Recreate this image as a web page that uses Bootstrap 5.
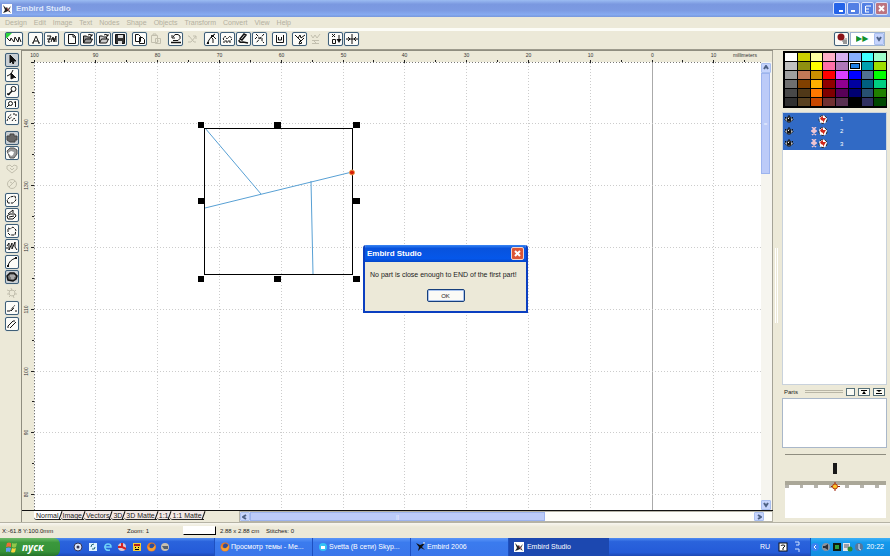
<!DOCTYPE html>
<html lang="en">
<head>
<meta charset="utf-8">
<meta name="viewport" content="width=device-width, initial-scale=1">
<title>Embird Studio</title>
<link href="https://cdn.jsdelivr.net/npm/bootstrap@5.3.0/dist/css/bootstrap.min.css" rel="stylesheet">
<style>
:root { --face:#ece9d8; --blue:#316ac5; }
body { font:6px/8px "Liberation Sans", Arial, sans-serif; color:#222; background:var(--face); white-space:nowrap; }
button, select, input { font:inherit; color:inherit; padding:0; border-radius:0; }
svg { display:block; flex:none; }
.ico { fill:none; stroke:#111; stroke-width:1; }
.titlebar { height:17px; padding:0 2px; background:linear-gradient(#9bbcf2,#7a98e0 25%,#7c9ae2 60%,#86aaf0 85%,#7898dc); color:#dfe8fb; font:bold 8px/16px "Liberation Sans", Arial, sans-serif; }
.winbtn { width:13px; height:13px; border:1px solid #d4e0fb; border-radius:2px; background:#5380e4; }
.winbtn.is-lit { background:#2463e8; }
.winbtn.is-close { background:#bc7480; }
.winbtn svg, .dlg-close svg { stroke:#fff; fill:none; stroke-width:2; margin:auto; }
.menubar { height:11px; padding:2px 5px 0; gap:7px; font-size:7px; }
.menubar a { color:#b3b0a0; text-decoration:none; }
.toolbar { height:22px; border-top:3px solid #fcfcf6; border-bottom:1px solid #9d9b8d; padding:1px 5px; gap:5px; }
.tool { width:15px; height:14px; border:1px solid #3f5f78; border-radius:2px; background:#fbfbf8; box-shadow:0 0 1px #8db0d0; display:flex; align-items:center; justify-content:center; }
.tool.is-wide { width:18px; }
.tool.is-short { height:10px; }
.tool.is-down { background:#c9cfd4; }
.tool:disabled { background:none; border-color:transparent; box-shadow:none; }
.tool:disabled svg { stroke:#c2bfae; }
.hair { gap:1px; }
.toolbox { width:21px; padding:3px 0 0 5px; gap:2px; }
.toolbox .tool { width:14px; }
.combo { width:35px; height:14px; border:1px solid #9fb4d0; background:#fff; }
.combo select { appearance:none; border:0; background:#fff; color:#12922a; font:8px/12px "DejaVu Sans", sans-serif; padding-left:5px; min-width:0; }
.scrollbtn { width:10px; height:10px; border:1px solid #a9bff0; border-radius:1px; background:#c6d4fc; display:flex; align-items:center; justify-content:center; }
.scrollbtn svg { stroke:#4d6185; fill:none; stroke-width:2; }
.workspace { border-left:1px solid #8f8d80; border-top:1px solid #8f8d80; }
.vbar { width:12px; padding-top:12px; border-right:1px solid #a5a397; background:linear-gradient(var(--face) 11px,#f6f5ef 11px); }
.thumb { background:#bccbf8; border:1px solid #9db4ee; display:flex; align-items:center; justify-content:center; color:#eef3ff; }
.vbar .thumb { height:101px; width:9px; }
.sheet-row { height:12px; border-top:1px solid #111; background:var(--face); }
.sheets { width:217px; padding-left:12px; }
.sheets button { display:flex; background:#fff; border:0; border-bottom:1px solid #222; height:9px; padding:0 0 0 2px; gap:1px; border-bottom-left-radius:3px; font-size:7px; line-height:9px; }
.sheets button::after { content:""; width:1px; height:9px; background:#111; transform:rotate(20deg); }
.sheets button + button { background:#f3e9e6; }
.hbar { border:1px solid #b5b3a6; background:#fdfdfa; }
.hbar .thumb { width:295px; }
.ruler-text { font:5px "Liberation Sans", sans-serif; fill:#333; }
.dialog-win { position:absolute; left:341px; top:194px; width:165px; border:2px solid #0b3fc0; border-top:0; border-radius:3px 3px 0 0; background:var(--face); overflow:hidden; }
.dialog-title { height:17px; padding:0 2px; background:linear-gradient(#3a86f4,#0853dd 20%,#0557ea 80%,#0446c8); color:#fff; font:bold 8px/16px "Liberation Sans", Arial, sans-serif; }
.dlg-close { width:13px; height:13px; border:1px solid #f4d5cc; border-radius:2px; background:#dc5636; }
.dialog-text { padding:9px 5px 10px; font:7px/8px "Liberation Sans", Arial, sans-serif; margin:0; }
.ok-btn { width:38px; height:13px; border:1px solid #173f7c; border-radius:2px; background:#fbfaf6; box-shadow:inset 0 0 0 1px #a9c3ee; margin-bottom:9px; }
.splitter { width:9px; background:linear-gradient(#fff,#fff) 4px 198px/1px 75px no-repeat, linear-gradient(#fff,#fff) 2px 198px/1px 75px no-repeat, var(--face); }
.sidepane { width:108px; padding:1px 3px 4px 0; }
.palette { display:grid; grid-template-columns:repeat(8,1fr); grid-auto-rows:8px; gap:1px; padding:1px 0 1px 1px; border:1px solid #000; background:#000; margin-left:1px; }
.palette button { border:0; }
.palette button.is-picked { border:1px solid #fff; outline:1px solid #000; outline-offset:-2px; }
.layer-list { margin-top:4px; background:#fff; border:1px solid #c9d2dc; }
.layer-list li { height:12px; background:var(--blue); color:#fff; padding-left:1px; }
.layer-list li:only-child, .layer-list li:last-child { height:13px; }
.layer-gap { width:24px; }
.parts-head { height:13px; padding:0 2px; gap:3px; }
.groove { height:3px; border-top:1px solid #b9b6a6; border-bottom:1px solid #b9b6a6; }
.mini { width:9px; height:8px; border:1px solid #56707a; background:#fbfbf4; }
.parts-box { height:50px; background:#fff; border:1px solid #a9b7c9; }
.stitch-view { margin:6px 1px 0 3px; border-top:1px solid #8f8d80; }
.statusbar { height:16px; border-top:1px solid #b5b3a5; padding:0 2px; background:linear-gradient(#f8f7f0,var(--face) 4px); }
.st-pos { width:125px; }
.st-zoom { width:56px; }
.st-size { width:46px; }
.thread-box { width:33px; height:9px; border:1px solid #fff; border-right-color:#000; border-bottom-color:#000; background:#fff; }
.taskbar { height:18px; background:linear-gradient(#4f8cf2,#2a63dc 20%,#245bd8 80%,#1c48b4); color:#fff; font:7px/18px "Liberation Sans", sans-serif; }
.start { width:60px; border:0; border-radius:0 6px 6px 0; background:linear-gradient(#6cba68,#3b983c 25%,#369238 75%,#25722a); color:#fff; font:italic bold 10px/16px "Open Sans", "Noto Sans", sans-serif; padding-left:6px; gap:4px; }
.quick { padding-left:13px; gap:3px; width:154px; }
.task { width:98px; border:0; border-left:1px solid #1e50c0; background:linear-gradient(#5b96f8,#3b7bee 25%,#3a76ea); color:#fff; padding-left:5px; gap:1px; text-align:left; }
.task.is-active { width:101px; background:#1c48b0; }
.tray { width:80px; background:linear-gradient(#3fb0f6,#159aec 25%,#118ce0); border-left:1px solid #0e58b8; padding:0 6px 0 0; gap:1px; }
</style>
<script src="https://cdn.jsdelivr.net/npm/bootstrap@5.3.0/dist/js/bootstrap.bundle.min.js"></script>
</head>
<body class="vh-100 d-flex flex-column overflow-hidden">
<svg width="0" height="0" class="position-absolute" aria-hidden="true">
  <defs>
    <symbol id="app" viewBox="0 0 10 10"><rect width="10" height="10" fill="#fff"/><path d="M1 1l3 3 1-1 1 2 3-3-2 4 2 3-3-2-2 1-3 1 2-3z" fill="#222"/><path d="M5 4l2 3" stroke="#c66"/></symbol>
    <symbol id="eye" viewBox="0 0 10 9"><path d="M1 4.5Q5-1 9 4.5 5 10 1 4.500z" fill="#fff" stroke="#111"/><circle cx="5" cy="4.500" r="2.300" fill="#111"/><path d="M4 3h1v1H4z" fill="#fff"/><path d="M1 2l1 1M5 0v2M9 2L8 3" stroke="#111"/></symbol>
    <symbol id="ball" viewBox="0 0 10 9"><circle cx="5" cy="4.500" r="4" fill="#fff" stroke="#222" stroke-dasharray="3 2"/><path d="M2 3l3-2v2h3L5 8V6L3 5z" fill="#d12a1c"/></symbol>
    <symbol id="knot" viewBox="0 0 6 9"><path d="M1 0l4 4-4 4M5 0L1 4l4 4M0 4h6" stroke="#f0c5d2" stroke-width="1.500" fill="none"/></symbol>
    <symbol id="fox" viewBox="0 0 10 10"><circle cx="5" cy="5" r="4.500" fill="#e87722"/><circle cx="5.500" cy="4" r="2.500" fill="#2d4f9e"/><path d="M1 3q1 4 5 3l3-3q0 6-4 6Q1 9 1 3z" fill="#f7a233"/></symbol>
    <symbol id="chev-down" viewBox="0 0 6 6"><path d="M1 1l2 3 2-3"/></symbol>
  </defs>
</svg>

<header>
  <div class="titlebar d-flex align-items-center">
    <svg width="10" height="10" class="me-1"><use href="#app"/></svg>
    <span class="me-auto">Embird Studio</span>
    <div class="d-flex hair">
      <button class="winbtn is-lit" aria-label="Tray"><svg width="9" height="9"><path d="M4 7h4"/></svg></button>
      <button class="winbtn" aria-label="Minimize"><svg width="9" height="9"><path d="M2 7h4"/></svg></button>
      <button class="winbtn" aria-label="Restore"><svg width="9" height="9"><path d="M3 2h5M2 5h4M2 8h4M2.500 2v6" stroke-width="1"/></svg></button>
      <button class="winbtn is-close" aria-label="Close"><svg width="9" height="9"><path d="M2 2l5 5M7 2L2 7"/></svg></button>
    </div>
  </div>
  <nav class="menubar d-flex">
    <a href="#">Design</a><a href="#">Edit</a><a href="#">Image</a><a href="#">Text</a><a href="#">Nodes</a><a href="#">Shape</a><a href="#">Objects</a><a href="#">Transform</a><a href="#">Convert</a><a href="#">View</a><a href="#">Help</a>
  </nav>
  <div class="toolbar d-flex" role="toolbar">
    <button class="tool is-wide" aria-label="Stitches"><svg class="ico" width="16" height="12"><path d="M0 0h6L1 5H0z" fill="#2fd33c" stroke="none"/><path d="M1 5l3 3 1-3 3 4 1-5 3 5 1-5 2 5"/></svg></button>
    <div class="d-flex hair">
      <button class="tool" aria-label="Letter"><svg class="ico" width="12" height="12"><path d="M3 10l3-7 3 7M4 8h4M2 10h2M8 10h2"/></svg></button>
      <button class="tool" aria-label="Monogram"><svg class="ico" width="12" height="12"><path d="M1 3h4L2 9h2M5 9l2-5 1 5 2-6v6M1 6h9"/></svg></button>
    </div>
    <div class="d-flex hair">
      <button class="tool" aria-label="New"><svg class="ico" width="12" height="12"><path d="M2.500 1.500h5l2 2v7h-7zM7 2v2h3"/></svg></button>
      <button class="tool" aria-label="Open"><svg class="ico" width="12" height="12"><path d="M1.500 10V3h3l1 1h3v2M1.500 10l2-4h7l-2 4z" fill="#999"/><path d="M6 2q2-2 4 1M10 1v2H8"/></svg></button>
      <button class="tool" aria-label="Import"><svg class="ico" width="12" height="12"><path d="M1.500 10V3h3l1 1h3v2M1.500 10l2-4h7l-2 4z" fill="#ccc"/><path d="M6 2q2-2 4 1M10 1v2H8"/></svg></button>
      <button class="tool" aria-label="Save"><svg class="ico" width="12" height="12"><path d="M1.500 1.500h9v9h-9z" fill="#333"/><path d="M4 2h5v3H4zM4 8h4v3H4z" fill="#ddd" stroke="none"/></svg></button>
    </div>
    <div class="d-flex hair">
      <button class="tool" aria-label="Copy"><svg class="ico" width="12" height="12"><path d="M1.500 1.500h3l2 2v5h-5zM5.500 4.500h3l2 2v4h-5z" fill="#fff"/></svg></button>
      <button class="tool" disabled aria-label="Paste"><svg class="ico" width="12" height="12"><path d="M1.500 2.500h6v7h-6zM5.500 5.500h5v5h-5zM3 2V1h3v1M7 8h2"/></svg></button>
    </div>
    <div class="d-flex hair">
      <button class="tool" aria-label="Undo"><svg class="ico" width="12" height="12"><path d="M1 9.500h10" stroke-width="1.500"/><path d="M3 7.500h5l2-2V3L8 1.500H5L3 4M2 2v3h3"/></svg></button>
      <button class="tool" disabled aria-label="Redo"><svg class="ico" width="12" height="12"><path d="M2 9h3l5-6M10 9H8L3 3H2M7 3h3v3"/></svg></button>
    </div>
    <div class="d-flex hair">
      <button class="tool" aria-label="Edit node"><svg class="ico" width="12" height="12"><path d="M1 11l2-4 3-4 3-2M5 4l2 2v4M7 3l3 3"/><path d="M5 2h3v2H5zM1 9h2v2H1z" fill="#111" stroke="none"/></svg></button>
      <button class="tool" aria-label="Smooth"><svg class="ico" width="12" height="12"><path d="M1 9h9M1 6l2-3 2 3 3-3 2 3-2 2H3z" stroke-dasharray="2 1"/></svg></button>
      <button class="tool" aria-label="Draw"><svg class="ico" width="12" height="12"><path d="M2 6l4-5 2 1-4 5zM1 7q0 3 4 2l5 1" stroke-width="1.500"/></svg></button>
      <button class="tool" aria-label="Cut"><svg class="ico" width="12" height="12"><path d="M2 1l3 3M10 1L2 10M4 5h4v3l2 2M1 6l2-2" stroke-dasharray="3 1"/></svg></button>
    </div>
    <button class="tool" aria-label="Frame"><svg class="ico" width="12" height="12"><path d="M2.500 2v7.500h7V2M4.500 4v3h3V4"/></svg></button>
    <div class="d-flex hair">
      <button class="tool" aria-label="Group"><svg class="ico" width="12" height="12"><path d="M1 2l3 3 2-3 1 3 4-3M4 5l3 3 3-3M6 8l-1 3 3-1z"/></svg></button>
      <button class="tool" disabled aria-label="Ungroup"><svg class="ico" width="12" height="12"><path d="M1 2l2 3 2-3 2 3 3-4M2 7.500h7M2 10.500h7M3 7l3 3"/></svg></button>
    </div>
    <div class="d-flex hair">
      <button class="tool" aria-label="Order"><svg class="ico" width="12" height="12"><path d="M2 1l3 3M5 1L2 4M2.500 6.500h3v4h-3zM9 2v6"/><path d="M6.500 6h5L9 10z" fill="#111" stroke="none"/></svg></button>
      <button class="tool" aria-label="Center"><svg class="ico" width="12" height="12"><path d="M6 1v10M0 6h12M2 4l2 2-2 2M10 4L8 6l2 2"/></svg></button>
    </div>
    <div class="d-flex hair ms-auto">
      <button class="tool" aria-label="Record"><svg class="ico" width="12" height="12"><circle cx="5" cy="4" r="3.500" fill="#8c1418" stroke="none"/><path d="M6 8h5M7 10h4M8 6v5M10 5v6" stroke="#777"/></svg></button>
      <label class="combo d-flex align-items-center"><select class="flex-grow-1" aria-label="Speed"><option>▶▶</option></select><span class="scrollbtn h-100"><svg width="6" height="6"><use href="#chev-down"/></svg></span></label>
    </div>
  </div>
</header>

<main class="d-flex flex-grow-1" style="min-height:0">
  <aside class="toolbox d-flex flex-column">
    <div class="d-flex flex-column hair">
      <button class="tool is-down" aria-label="Select"><svg class="ico" width="12" height="12"><path d="M4 1v8l2-2 1 3 1-1-1-2h3z" fill="#111"/></svg></button>
      <button class="tool" aria-label="Nodes"><svg class="ico" width="12" height="12"><path d="M1 7l4-2 2-4M7 6l3 3"/><path d="M5 4v6l4-2z" fill="#111"/></svg></button>
    </div>
    <div class="d-flex flex-column hair">
      <button class="tool" aria-label="Zoom"><svg class="ico" width="12" height="12"><circle cx="7.500" cy="4" r="2.500"/><path d="M6 6l-4 4M1 9h3" stroke-width="1.500"/></svg></button>
      <button class="tool is-short" aria-label="Zoom one to one"><svg class="ico" width="12" height="8"><circle cx="4.500" cy="3.500" r="2"/><path d="M3 5L1 7M8 2.500l1.500-1V7"/></svg></button>
    </div>
    <button class="tool mb-1" aria-label="Measure"><svg class="ico" width="12" height="12"><path d="M1 9l2-5 3-2M3 7l3-2M6 9l2-3 2 3M7 2h3v3" stroke-dasharray="2 1"/></svg></button>
    <div class="d-flex flex-column hair">
      <button class="tool is-down" aria-label="Filled shape"><svg class="ico" width="12" height="12"><path d="M1 4h3V2h4v2h3v4H9v2H4L1 8z" fill="#666" stroke="#444"/></svg></button>
      <button class="tool" aria-label="Shape with opening"><svg class="ico" width="12" height="12"><path d="M1 4l3-3h4l3 2v4l-3 4H4z" fill="#999" stroke="#555"/><path d="M2 6l3-2 3 1-1 3-2 1z" fill="#fff" stroke="none"/></svg></button>
    </div>
    <div class="d-flex flex-column hair">
      <button class="tool" disabled aria-label="Heart"><svg class="ico" width="12" height="12"><path d="M6 10L1 6V3l3-1 2 2 2-2 3 1v3zM4 5l2 2 2-2"/></svg></button>
      <button class="tool" disabled aria-label="Oval"><svg class="ico" width="12" height="12"><circle cx="6" cy="6" r="4.500"/><path d="M3 9l6-6M4 4l2 1"/></svg></button>
    </div>
    <div class="d-flex flex-column hair">
      <button class="tool" aria-label="Outline"><svg class="ico" width="12" height="12"><path d="M2 9L1 6l3-3 5-1 1 4-3 3z" stroke-dasharray="3 1"/></svg></button>
      <button class="tool" aria-label="Column"><svg class="ico" width="12" height="12"><path d="M2 10L1 7l3-2h5l1 2-3 3zM2 5l5-4v3M3 8l5-1"/></svg></button>
    </div>
    <div class="d-flex flex-column hair">
      <button class="tool" aria-label="Polygon"><svg class="ico" width="12" height="12"><path d="M2 3l2 1 3-2 3 3-1 5H4L2 8z" stroke-dasharray="3 1"/></svg></button>
      <button class="tool" aria-label="Zigzag"><svg class="ico" width="12" height="12"><path d="M1 6l2-3v7l3-7v6l3-7v5l2 3M1 9V7"/></svg></button>
    </div>
    <div class="d-flex flex-column hair">
      <button class="tool" aria-label="Curve"><svg class="ico" width="12" height="12"><path d="M2 10q1-6 8-8"/><path d="M1 9h2v2H1zM9 1h2v2H9z" fill="#111" stroke="none"/></svg></button>
      <button class="tool is-down" aria-label="Applique"><svg class="ico" width="12" height="12"><path d="M1 5l3-3h4l3 3-1 3-3 2-5-1z" fill="#777" stroke-width="1.500"/><path d="M4 5h5M5 7h3" stroke="#ddd"/></svg></button>
    </div>
    <div class="d-flex flex-column hair">
      <button class="tool" disabled aria-label="Net"><svg class="ico" width="12" height="12"><circle cx="6" cy="6" r="3"/><path d="M1 3l3 1M5 1l1 3M10 3L8 5M11 7L8 7M8 11L7 8M3 10l2-2M1 7h3"/></svg></button>
      <button class="tool" aria-label="Line"><svg class="ico" width="12" height="12"><path d="M1 9h3l5-6M5 9l3-3M9 9h2" stroke-dasharray="4 1"/></svg></button>
    </div>
    <button class="tool" aria-label="Double line"><svg class="ico" width="12" height="12"><path d="M2 8l5-5M4 10l6-6M2 8v2M8 2v2"/></svg></button>
  </aside>

  <section class="workspace d-flex flex-column flex-grow-1 position-relative" style="min-width:0">
    <div class="d-flex flex-grow-1" style="min-height:0">
      <div class="flex-grow-1 overflow-hidden" style="min-width:0">
        <svg id="board" width="100%" height="100%" role="img" aria-label="Design canvas">
          <rect width="100%" height="100%" fill="#ece9d8"/>
          <rect x="12" y="11" width="100%" height="100%" fill="#fff"/>
          <g id="grid"></g>
          <path d="M12 11.500H2000M12.500 11V2000" stroke="#777" stroke-dasharray="1 2"/>
          <text class="ruler-text" x="711" y="6">millimeters</text>
          <g fill="none" stroke="#58a0d4"><path d="M183 77l56 66M183 157l147-36M289 130l2 93"/></g>
          <rect x="182.500" y="77.500" width="148" height="146" fill="none" stroke="#000"/>
          <path d="M176 71h6v6h-6zM252 71h7v6h-7zM331 71h7v6h-7zM176 147h6v6h-6zM331 147h7v6h-7zM176 225h6v6h-6zM252 225h7v6h-7zM331 225h7v6h-7z"/>
          <circle cx="330" cy="121.500" r="2.500" fill="#d81e08" stroke="#f0a050"/>
        </svg>
      </div>
      <div class="vbar d-flex flex-column">
        <button class="scrollbtn" aria-label="Scroll up"><svg width="6" height="6"><path d="M1 4l2-3 2 3"/></svg></button>
        <div class="thumb">=</div>
        <button class="scrollbtn mt-auto" aria-label="Scroll down"><svg width="6" height="6"><use href="#chev-down"/></svg></button>
      </div>
    </div>
    <div class="sheet-row d-flex">
      <div class="sheets d-flex">
        <button>Normal</button><button>Image</button><button>Vectors</button><button>3D</button><button>3D Matte</button><button>1:1</button><button>1:1 Matte</button>
      </div>
      <div class="hbar d-flex flex-grow-1">
        <button class="scrollbtn h-100" aria-label="Scroll left"><svg width="6" height="6"><path d="M4 1L1 3l3 2"/></svg></button>
        <div class="thumb">||</div>
        <button class="scrollbtn h-100 ms-auto me-2" aria-label="Scroll right"><svg width="6" height="6"><path d="M2 1l3 2-3 2"/></svg></button>
      </div>
    </div>
    <div class="dialog-win" role="dialog" aria-labelledby="dlg-name">
      <div class="dialog-title d-flex align-items-center justify-content-between"><span id="dlg-name">Embird Studio</span><button class="dlg-close" aria-label="Close"><svg width="9" height="9"><path d="M2 2l5 5M7 2L2 7"/></svg></button></div>
      <p class="dialog-text">No part is close enough to END of the first part!</p>
      <button class="ok-btn d-block mx-auto">OK</button>
    </div>
  </section>
  <div class="splitter"></div>
  <aside class="sidepane d-flex flex-column">
    <div class="palette" id="palette"></div>
    <ul class="layer-list list-unstyled mb-0 flex-grow-1">
      <li class="d-flex align-items-center"><svg width="10" height="9"><use href="#eye"/></svg><span class="layer-gap"></span><svg width="10" height="9"><use href="#ball"/></svg><span class="ps-2 ms-1">1</span></li>
      <li class="d-flex align-items-center"><svg width="10" height="9"><use href="#eye"/></svg><svg class="ms-3" width="8" height="9"><use href="#knot"/></svg><svg width="10" height="9"><use href="#ball"/></svg><span class="ps-2 ms-1">2</span></li>
      <li class="d-flex align-items-center"><svg width="10" height="9"><use href="#eye"/></svg><svg class="ms-3" width="8" height="9"><use href="#knot"/></svg><svg width="10" height="9"><use href="#ball"/></svg><span class="ps-2 ms-1">3</span></li>
    </ul>
    <div class="parts-head d-flex align-items-center"><span>Parts</span><span class="groove flex-grow-1 ms-1"></span>
      <button class="mini" aria-label="Blank"></button>
      <button class="mini w-auto" aria-label="Up"><svg width="10" height="6"><path d="M2 1h6v1H2zM5 2l2 3H3z"/></svg></button>
      <button class="mini w-auto" aria-label="Down"><svg width="10" height="6"><path d="M2 1h6L5 3zM2 4h6v1H2z"/></svg></button>
    </div>
    <div class="parts-box"></div>
    <div class="stitch-view">
      <svg class="w-100" height="63" viewBox="0 0 101 63" preserveAspectRatio="none"><path d="M0 27h101v36H0z" fill="#fff"/><path d="M0 26h101v4H0z" fill="#aaa798"/><path d="M0 30h4v3H0zM15 30h3v3h-3zM29 30h4v3h-4zM44 30h4v3h-4zM60 30h4v3h-4zM75 30h4v3h-4zM90 30h4v3h-4z" fill="#b5b3ac"/><path d="M48 8h4v11h-4z" fill="#181818"/><path d="M50 27v9M46 31.500h9" stroke="#a02008"/><circle cx="50" cy="31.500" r="2.500" fill="#ffc52c" stroke="#b03a10"/></svg>
    </div>
  </aside>
</main>

<footer>
  <div class="statusbar d-flex align-items-center">
    <span class="st-pos">X:-61.8 Y:100.0mm</span><span class="st-zoom">Zoom: 1</span><span class="thread-box me-1"></span><span class="st-size">2.88 x 2.88 cm</span><span>Stitches: 0</span>
  </div>
  <div class="taskbar d-flex">
    <button class="start d-flex align-items-center"><svg width="12" height="12"><path d="M1 2q2-1 4 0v4Q3 5 0 6z" fill="#ee6a35"/><path d="M6 2q2 1 5 0l-1 4q-2 1-4 0z" fill="#91c84a"/><path d="M0 7q3-1 5 0l-1 4q-2-1-4 0z" fill="#5c9df0"/><path d="M6 7q2 1 4 0l-1 4q-2 1-4 0z" fill="#f7d33c"/></svg>пуск</button>
    <div class="quick d-flex align-items-center">
      <svg width="11" height="10"><circle cx="5" cy="5" r="4" fill="#dde6f8" stroke="#335"/><circle cx="5" cy="5" r="1.500" fill="#335"/></svg>
      <svg width="12" height="10"><rect x="2" y="1" width="8" height="8" fill="#dff3ff"/><path d="M4 5q0-3 3-3M8 5q0 3-3 2" stroke="#267" fill="none"/></svg>
      <svg width="12" height="10"><path d="M2 5h7q0-3-3-3T3 5q0 4 5 3" fill="none" stroke="#6fd1f8" stroke-width="1.500"/></svg>
      <svg width="12" height="10"><circle cx="5" cy="5" r="4" fill="#d9c8d4"/><path d="M5 1v4l4 2M1 5h4" stroke="#d52222" stroke-width="2" fill="none"/></svg>
      <svg width="11" height="10"><rect x="1" y="1" width="8" height="8" fill="#f4ce38"/><path d="M2 2h6v2H2z" fill="#b3201a"/><path d="M3 5h1v1H3zM6 5h1v1H6zM3 7h4v1H3z"/></svg>
      <svg width="11" height="10"><use href="#fox"/></svg>
      <svg width="11" height="10"><circle cx="5" cy="5" r="4" fill="#c9bfae"/><path d="M2 4h6v3H4z" fill="#56606e"/></svg>
    </div>
    <button class="task d-flex align-items-center"><svg width="10" height="10"><use href="#fox"/></svg>Просмотр темы - Ме...</button>
    <button class="task d-flex align-items-center"><svg width="10" height="10"><circle cx="5" cy="5" r="4" fill="#35c3f4"/><path d="M3 4h4v3H3z" fill="#fff"/></svg>Svetta (В сети) Skyp...</button>
    <button class="task d-flex align-items-center"><svg width="10" height="10"><path d="M0 1l4 2 5-2-3 4 3 3-4-2-3 3 1-4z" fill="#111"/><path d="M7 1h2" stroke="#fff"/></svg>Embird 2006</button>
    <button class="task is-active d-flex align-items-center"><svg width="10" height="10"><use href="#app"/></svg>&nbsp;Embird Studio</button>
    <div class="d-flex align-items-center ms-auto gap-1 pe-2"><span class="pe-1">RU</span><svg width="10" height="10"><rect x="1" y="1" width="8" height="8" fill="#fff" stroke="#111"/><path d="M3 4q0-1 2-1t2 1L5 6v2" stroke="#111" fill="none"/></svg><svg width="10" height="12"><path d="M3 1h4v3H4M3 8h4v3" stroke="#cfe2ff" fill="none"/></svg></div>
    <div class="tray d-flex align-items-center">
      <svg width="9" height="12"><circle cx="4" cy="6" r="4" fill="#3a82f0"/><path d="M5 4L3 6l2 2" stroke="#fff" fill="none"/></svg>
      <svg width="10" height="12"><circle cx="5" cy="6" r="4" fill="#8c949e"/><path d="M2 5h2l3-2v6L4 7H2z" fill="#2b3038"/></svg>
      <svg width="10" height="12"><rect x="1" y="2" width="8" height="8" fill="#101c10"/><path d="M3 4h4v4H3z" fill="#2f9e3c"/></svg>
      <svg width="10" height="12"><path d="M0 2h7v8H0z" fill="#e3e7ea"/><path d="M1 4h5M1 6h5" stroke="#556"/><circle cx="7" cy="8" r="2.500" fill="#2b8a34"/></svg>
      <svg width="10" height="12"><circle cx="5" cy="6" r="4" fill="#56779c"/><path d="M5 3v5l2 1" stroke="#dfefff" fill="none"/></svg>
      <span class="ms-auto">20:22</span>
    </div>
  </div>
</footer>

<script>
// Colour palette, eight swatches to a row
const colours = `fff ccd000 ffffa0 ffb0c8 d8b0f0 88b0ff 40ffff a0ffcc
c0c0c0 909010 ffff00 ff70a8 b078b8 2080e8 00a0b0 a0e000
a0a0a0 c07858 c89000 ff0000 d840ff 0000ff 507090 00ff00
707070 804000 ffb000 900000 900090 0000a0 006080 00d080
484848 503818 ff7800 800000 580058 000070 285070 208000
303030 584020 c84800 703030 583050 000000 303060 004800`.split(/\s+/);
document.getElementById('palette').innerHTML = colours.map((c, i) =>
  `<button aria-label="#${c}" class="${i === 13 ? 'is-picked' : ''}" style="background:#${c}"></button>`).join('');

// Grid lines, ticks and ruler numbers, one step for each 10 mm
const step = 61.8;
let out = '';
for (let i = 0; i < 12; i++) {
  const x = Math.floor(12 + i * step) + .5, mid = Math.floor(12 + (i + .5) * step);
  const axis = i === 10;
  out += `<path d="M${x} 12V2000" stroke="${axis ? '#aaa' : '#ccc'}" ${axis ? '' : 'stroke-dasharray="1 2"'}/>
    <path d="M${x} 9v3M${mid + .5} 9v2" stroke="#222"/>
    <text class="ruler-text" x="${x}" y="6" text-anchor="middle">${Math.abs(100 - i * 10)}</text>`;
}
for (let i = 0; i < 8; i++) {
  const y = Math.floor(11 + i * step) + .5, mid = Math.floor(11 + (i + .5) * step);
  out += `<path d="M12 ${y}H2000" stroke="#ccc" stroke-dasharray="1 2"/>
    <path d="M9 ${y}h3M10 ${mid + .5}h2" stroke="#222"/>`;
  if (i) out += `<text class="ruler-text" transform="translate(6 ${y}) rotate(-90)" text-anchor="middle">${150 - i * 10}</text>`;
}
document.getElementById('grid').innerHTML = out;
</script>
</body>
</html>
